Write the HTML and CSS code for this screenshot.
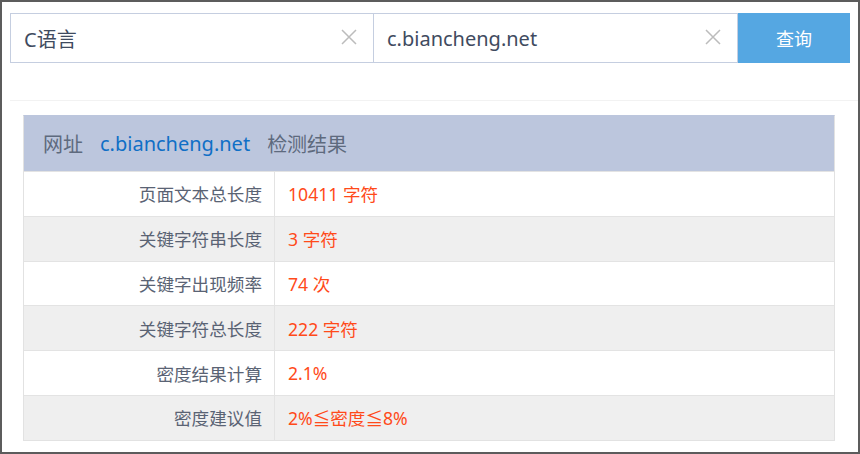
FILE: index.html
```html
<!DOCTYPE html>
<html lang="zh">
<head>
<meta charset="utf-8">
<link rel="stylesheet" href="styles.css">
</head>
<body>
<div class="frame">
  <div class="search">
    <div class="field field-first">
      <span class="field-text">C语言</span>
      <svg class="clear" width="16" height="16" viewBox="0 0 16 16"><path d="M1 1L15 15M15 1L1 15" stroke="#bcbcbc" stroke-width="1.5" fill="none"/></svg>
    </div>
    <div class="field">
      <span class="field-text">c.biancheng.net</span>
      <svg class="clear" width="16" height="16" viewBox="0 0 16 16"><path d="M1 1L15 15M15 1L1 15" stroke="#bcbcbc" stroke-width="1.5" fill="none"/></svg>
    </div>
    <div class="btn">查询</div>
  </div>
  <div class="sep"></div>
  <div class="result">
    <div class="result-head">
      <span class="muted">网址</span>
      <span class="link">c.biancheng.net</span>
      <span class="muted">检测结果</span>
    </div>
    <div class="row"><div class="label">页面文本总长度</div><div class="value">10411 字符</div></div>
    <div class="row alt"><div class="label">关键字符串长度</div><div class="value">3 字符</div></div>
    <div class="row"><div class="label">关键字出现频率</div><div class="value">74 次</div></div>
    <div class="row alt"><div class="label">关键字符总长度</div><div class="value">222 字符</div></div>
    <div class="row"><div class="label">密度结果计算</div><div class="value">2.1%</div></div>
    <div class="row alt"><div class="label">密度建议值</div><div class="value">2%≦密度≦8%</div></div>
  </div>
</div>
</body>
</html>
```
FILE: styles.css
```css
* { box-sizing: border-box; }
html, body { margin: 0; padding: 0; }
body {
  font-family: "Noto Sans", "Noto Sans CJK SC", sans-serif;
  background: #fff;
}
.frame {
  width: 860px;
  height: 454px;
  border: 2px solid #5c5c5c;
  padding: 11px 0 0 8px;
  overflow: hidden;
}
.search {
  display: flex;
  width: 840px;
  height: 50px;
}
.field {
  width: 364px;
  display: flex;
  align-items: center;
  justify-content: space-between;
  border: 1px solid #c5cee0;
  border-left: none;
  padding: 0 16px 0 13px;
}
.field-first {
  border-left: 1px solid #c5cee0;
}
.field-text {
  font-size: 20px;
  color: #3f4b60;
}
.clear { display: block; margin-top: -2px; }
.btn {
  width: 112px;
  background: #55a7e2;
  color: #fff;
  font-size: 18px;
  display: flex;
  align-items: center;
  justify-content: center;
}
.sep {
  height: 1px;
  background: #f2f2f2;
  margin: 37px 0 0 0;
}
.result {
  width: 812px;
  margin: 14px 0 0 13px;
  border: 1px solid #e2e2e2;
  border-top-color: #bcc6dd;
}
.result-head {
  height: 55px;
  background: #bcc6dd;
  display: flex;
  align-items: center;
  gap: 17px;
  padding-left: 19px;
  font-size: 20px;
}
.muted { color: #5e6a7e; }
.link { color: #0f6fc6; }
.row {
  display: flex;
  height: 44.8px;
  border-top: 1px solid #e3e3e3;
  font-size: 17.6px;
}
.row.alt { background: #efefef; }
.label {
  width: 251px;
  border-right: 1px solid #e3e3e3;
  text-align: right;
  padding-right: 12px;
  color: #5a6374;
  display: flex;
  align-items: center;
  justify-content: flex-end;
}
.value {
  padding-left: 13px;
  color: #ff4a1a;
  display: flex;
  align-items: center;
}
```
